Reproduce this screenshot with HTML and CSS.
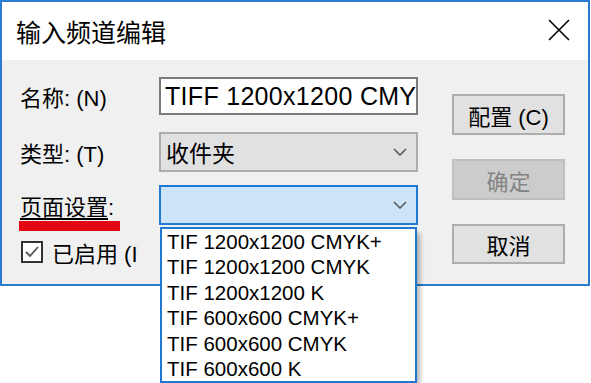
FILE: index.html
```html
<!DOCTYPE html>
<html lang="zh-CN">
<head>
    <meta charset="UTF-8">
    <title>输入频道编辑</title>
    <link rel="stylesheet" href="styles.css">
</head>
<body>

    <div class="dialog">
        <div class="titlebar">
            <span class="title">输入频道编辑</span>
            <svg class="close" width="22" height="22" viewBox="0 0 22 22">
                <path d="M1 1 L21 21 M21 1 L1 21" stroke="#000" stroke-width="1.6" fill="none"/>
            </svg>
        </div>

        <div class="content">
            <!-- Left side: fields -->
            <div class="form">
                <div class="row">
                    <span class="label">名称: (N)</span>
                    <div class="textbox">TIFF 1200x1200 CMYK+</div>
                </div>
                <div class="row row-type">
                    <span class="label">类型: (T)</span>
                    <div class="combo">
                        <span>收件夹</span>
                        <svg class="chevron" width="14" height="8" viewBox="0 0 14 8">
                            <path d="M1 1 L7 7 L13 1" stroke="#555" stroke-width="1.5" fill="none"/>
                        </svg>
                    </div>
                </div>
                <div class="row row-page">
                    <span class="label"><u>页面设置</u>:</span>
                    <div class="combo focused">
                        <span></span>
                        <svg class="chevron" width="14" height="8" viewBox="0 0 14 8">
                            <path d="M1 1 L7 7 L13 1" stroke="#555" stroke-width="1.5" fill="none"/>
                        </svg>
                        <!-- Open dropdown list -->
                        <ul class="droplist">
                            <li>TIF 1200x1200 CMYK+</li>
                            <li>TIF 1200x1200 CMYK</li>
                            <li>TIF 1200x1200 K</li>
                            <li>TIF 600x600 CMYK+</li>
                            <li>TIF 600x600 CMYK</li>
                            <li>TIF 600x600 K</li>
                        </ul>
                    </div>
                    <div class="mark"></div>
                </div>
                <div class="check-row">
                    <span class="checkbox">
                        <svg width="18" height="18" viewBox="0 0 18 18">
                            <path d="M3 9 L7 13 L15 4" stroke="#555" stroke-width="1.8" fill="none"/>
                        </svg>
                    </span>
                    <span class="check-label">已启用 (I)</span>
                </div>
            </div>

            <!-- Right side: buttons -->
            <div class="buttons">
                <div class="btn">配置 (C)</div>
                <div class="btn disabled">确定</div>
                <div class="btn short">取消</div>
            </div>
        </div>
    </div>

</body>
</html>
```

FILE: styles.css
```css
/* Page */
html, body {
    margin: 0;
    min-height: 383px;
}
body {
    background-color: #fff;
    font-family: "Liberation Sans", "Noto Sans CJK SC", sans-serif;
    color: #000;
}
/* Window frame */
.dialog {
    width: 586px;
    height: 282px;
    border: 2px solid #2a7cd0;
    background-color: #f0f0f0;
    display: flex;
    flex-direction: column;
}
.titlebar {
    height: 58px;
    background-color: #fff;
    display: flex;
    align-items: center;
    justify-content: space-between;
    padding: 0 18px 0 14px;
}
.title {
    font-size: 25px;
}
.close {
    margin-top: -2px;
}
/* Body */
.content {
    flex: 1;
    display: flex;
    padding: 17px 0 0 18px;
}
.form {
    width: 398px;
    display: flex;
    flex-direction: column;
}
.row {
    display: flex;
    align-items: center;
    height: 38px;
}
.row-type {
    height: 40px;
    margin-top: 17px;
}
.row-page {
    height: 40px;
    margin-top: 13px;
    position: relative;
}
.label {
    width: 139px;
    font-size: 22px;
    white-space: nowrap;
}
.label u {
    text-underline-offset: 3px;
}
.textbox {
    width: 259px;
    height: 38px;
    box-sizing: border-box;
    border: 2px solid #7a7a7a;
    background-color: #fff;
    padding-left: 4px;
    font-size: 25px;
    letter-spacing: 0.3px;
    white-space: nowrap;
    overflow: hidden;
    display: flex;
    align-items: center;
}
.combo {
    width: 259px;
    height: 40px;
    box-sizing: border-box;
    border: 2px solid #adadad;
    background-color: #e1e1e1;
    padding-left: 5px;
    font-size: 23px;
    display: flex;
    align-items: center;
    position: relative;
}
.combo.focused {
    border-color: #1f78d1;
    background-color: #cce4f7;
}
.chevron {
    margin-left: auto;
    margin-right: 9px;
}
.droplist {
    position: absolute;
    top: 40px;
    left: -1px;
    width: 257px;
    height: 156px;
    box-sizing: border-box;
    margin: 0;
    padding: 0 0 0 5px;
    list-style: none;
    background-color: #fff;
    border: 2px solid #1f78d1;
    box-shadow: 5px 4px 5px -2px rgba(0, 0, 0, 0.3);
    font-size: 20.5px;
    z-index: 2;
}
.droplist li {
    height: 25.4px;
    line-height: 25.4px;
    white-space: nowrap;
}
.mark {
    position: absolute;
    left: -1px;
    top: 36px;
    width: 101px;
    height: 10px;
    background-color: #e30613;
}
.check-row {
    display: flex;
    align-items: center;
    gap: 9px;
    height: 23px;
    margin-top: 15px;
    padding-left: 1px;
}
.checkbox {
    width: 22px;
    height: 22px;
    box-sizing: border-box;
    border: 2px solid #333;
    background-color: #fff;
    display: flex;
    align-items: center;
    justify-content: center;
}
.check-label {
    font-size: 22px;
    width: 86px;
    overflow: hidden;
    white-space: nowrap;
}
/* Buttons */
.buttons {
    margin-left: 34px;
    padding-top: 17px;
    display: flex;
    flex-direction: column;
    gap: 24px;
}
.btn {
    width: 113px;
    height: 41px;
    box-sizing: border-box;
    border: 2px solid #adadad;
    background-color: #e1e1e1;
    font-size: 22px;
    display: flex;
    align-items: center;
    justify-content: center;
}
.btn.short {
    height: 40px;
}
.btn.disabled {
    background-color: #cccccc;
    border-color: #bfbfbf;
    color: #838383;
}
```
